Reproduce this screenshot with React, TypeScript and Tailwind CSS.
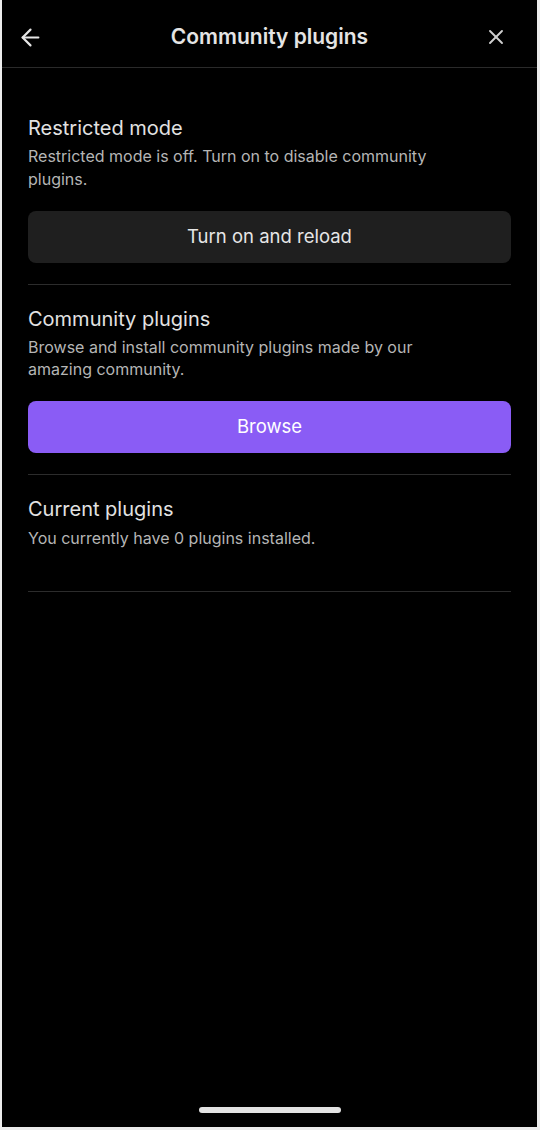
import React from "react";

function Divider() {
  return <div className="h-px bg-[#2c2c2c]" />;
}

export default function App() {
  return (
    <div className="w-[540px] h-[1130px] bg-[#ececec] flex" style={{ fontFamily: "Inter, 'Noto Sans', sans-serif" }}>
      <div className="ml-[2px] w-[535px] h-[1127px] bg-black flex flex-col relative">
        <header className="h-[68px] pt-[7px] flex items-center px-[15px] border-b border-[#2a2a2a]">
          <div className="w-[40px] flex items-center">
            <svg width="27" height="27" viewBox="0 0 24 24" fill="none" stroke="#e6e6e6" strokeWidth="1.9" strokeLinecap="round" strokeLinejoin="round">
              <path d="M19 12H5" />
              <path d="M12 19l-7-7 7-7" />
            </svg>
          </div>
          <h1 className="flex-1 text-center text-[21px] font-semibold text-[#e4e4e4]">Community plugins</h1>
          <div className="w-[40px] flex items-center">
            <svg width="24" height="24" viewBox="0 0 24 24" fill="none" stroke="#cfcfcf" strokeWidth="1.9" strokeLinecap="round" className="ml-[2px]">
              <path d="M18 6L6 18" />
              <path d="M6 6l12 12" />
            </svg>
          </div>
        </header>

        <main className="px-[26px] flex flex-col">
          <section className="pt-[46px] pb-[21px]">
            <h2 className="text-[20px] leading-[28px] text-[#e2e2e2]">Restricted mode</h2>
            <p className="mt-[3px] max-w-[445px] text-[16px] leading-[23px] text-[#b5b5b5]">
              Restricted mode is off. Turn on to disable community plugins.
            </p>
            <button className="mt-[20px] w-full h-[52px] rounded-[8px] bg-[#1f1f1f] text-[18.5px] text-[#e6e6e6]">
              Turn on and reload
            </button>
          </section>
          <Divider />
          <section className="pt-[20px] pb-[21px]">
            <h2 className="text-[20px] leading-[28px] text-[#e2e2e2]">Community plugins</h2>
            <p className="mt-[3px] max-w-[445px] text-[16px] leading-[22px] text-[#b5b5b5]">
              Browse and install community plugins made by our amazing community.
            </p>
            <button className="mt-[21px] w-full h-[52px] rounded-[8px] bg-[#8a5cf5] text-[18.5px] text-white">
              Browse
            </button>
          </section>
          <Divider />
          <section className="pt-[20px] pb-[42px]">
            <h2 className="text-[20px] leading-[28px] text-[#e2e2e2]">Current plugins</h2>
            <p className="mt-[4px] text-[16px] leading-[22px] text-[#b5b5b5]">
              You currently have 0 plugins installed.
            </p>
          </section>
          <Divider />
        </main>

        <div className="absolute left-[197px] bottom-[14px] w-[142px] h-[6px] rounded-full bg-[#e2e2e2]" />
      </div>
    </div>
  );
}
